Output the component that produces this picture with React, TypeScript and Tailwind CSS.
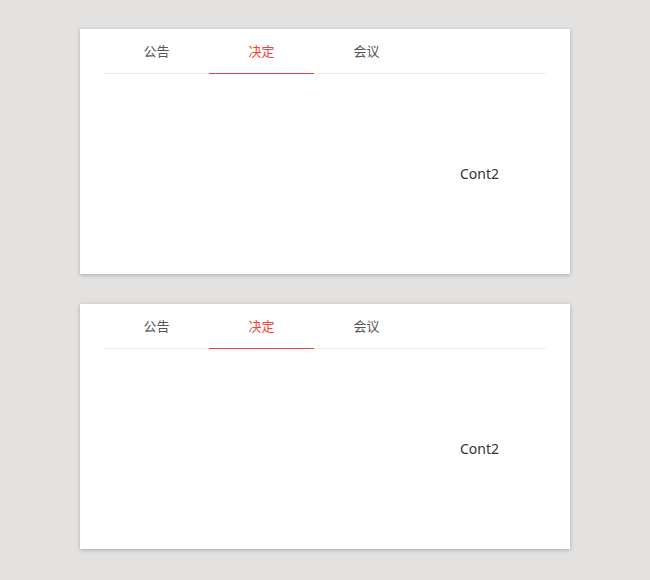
import { useState } from "react";

const tabs = ["公告", "决定", "会议"];

const TabCard = () => {
	const [active, setActive] = useState(1);

	return (
		<div className="w-[490px] h-[245px] bg-white shadow-[0_1px_4px_rgba(0,0,0,0.25)] px-6 flex flex-col">
			<div className="flex border-b border-[#eeeeee] h-[45px]">
				{tabs.map((t, i) => (
					<div
						key={t}
						onClick={() => setActive(i)}
						className={
							i === active
								? "w-[105px] flex justify-center items-center pt-[2px] text-[13px] text-[#f0433a] border-b border-[#f0433a] -mb-px cursor-pointer"
								: "w-[105px] flex justify-center items-center pt-[2px] text-[13px] text-[#555555] cursor-pointer"
						}
					>
						{t}
					</div>
				))}
			</div>
			<div className="flex-1 flex items-center pl-[356px] pb-[2px]">
				<p className="text-[14px] text-[#333333]">Cont{active + 1}</p>
			</div>
		</div>
	);
};

export default function App() {
	return (
		<div
			className="w-[650px] h-[580px] bg-[#e3e2e1] flex flex-col items-center pt-[29px] gap-[30px]"
			style={{ fontFamily: '"Noto Sans", "Noto Sans CJK SC", sans-serif' }}
		>
			<TabCard />
			<TabCard />
		</div>
	);
}
